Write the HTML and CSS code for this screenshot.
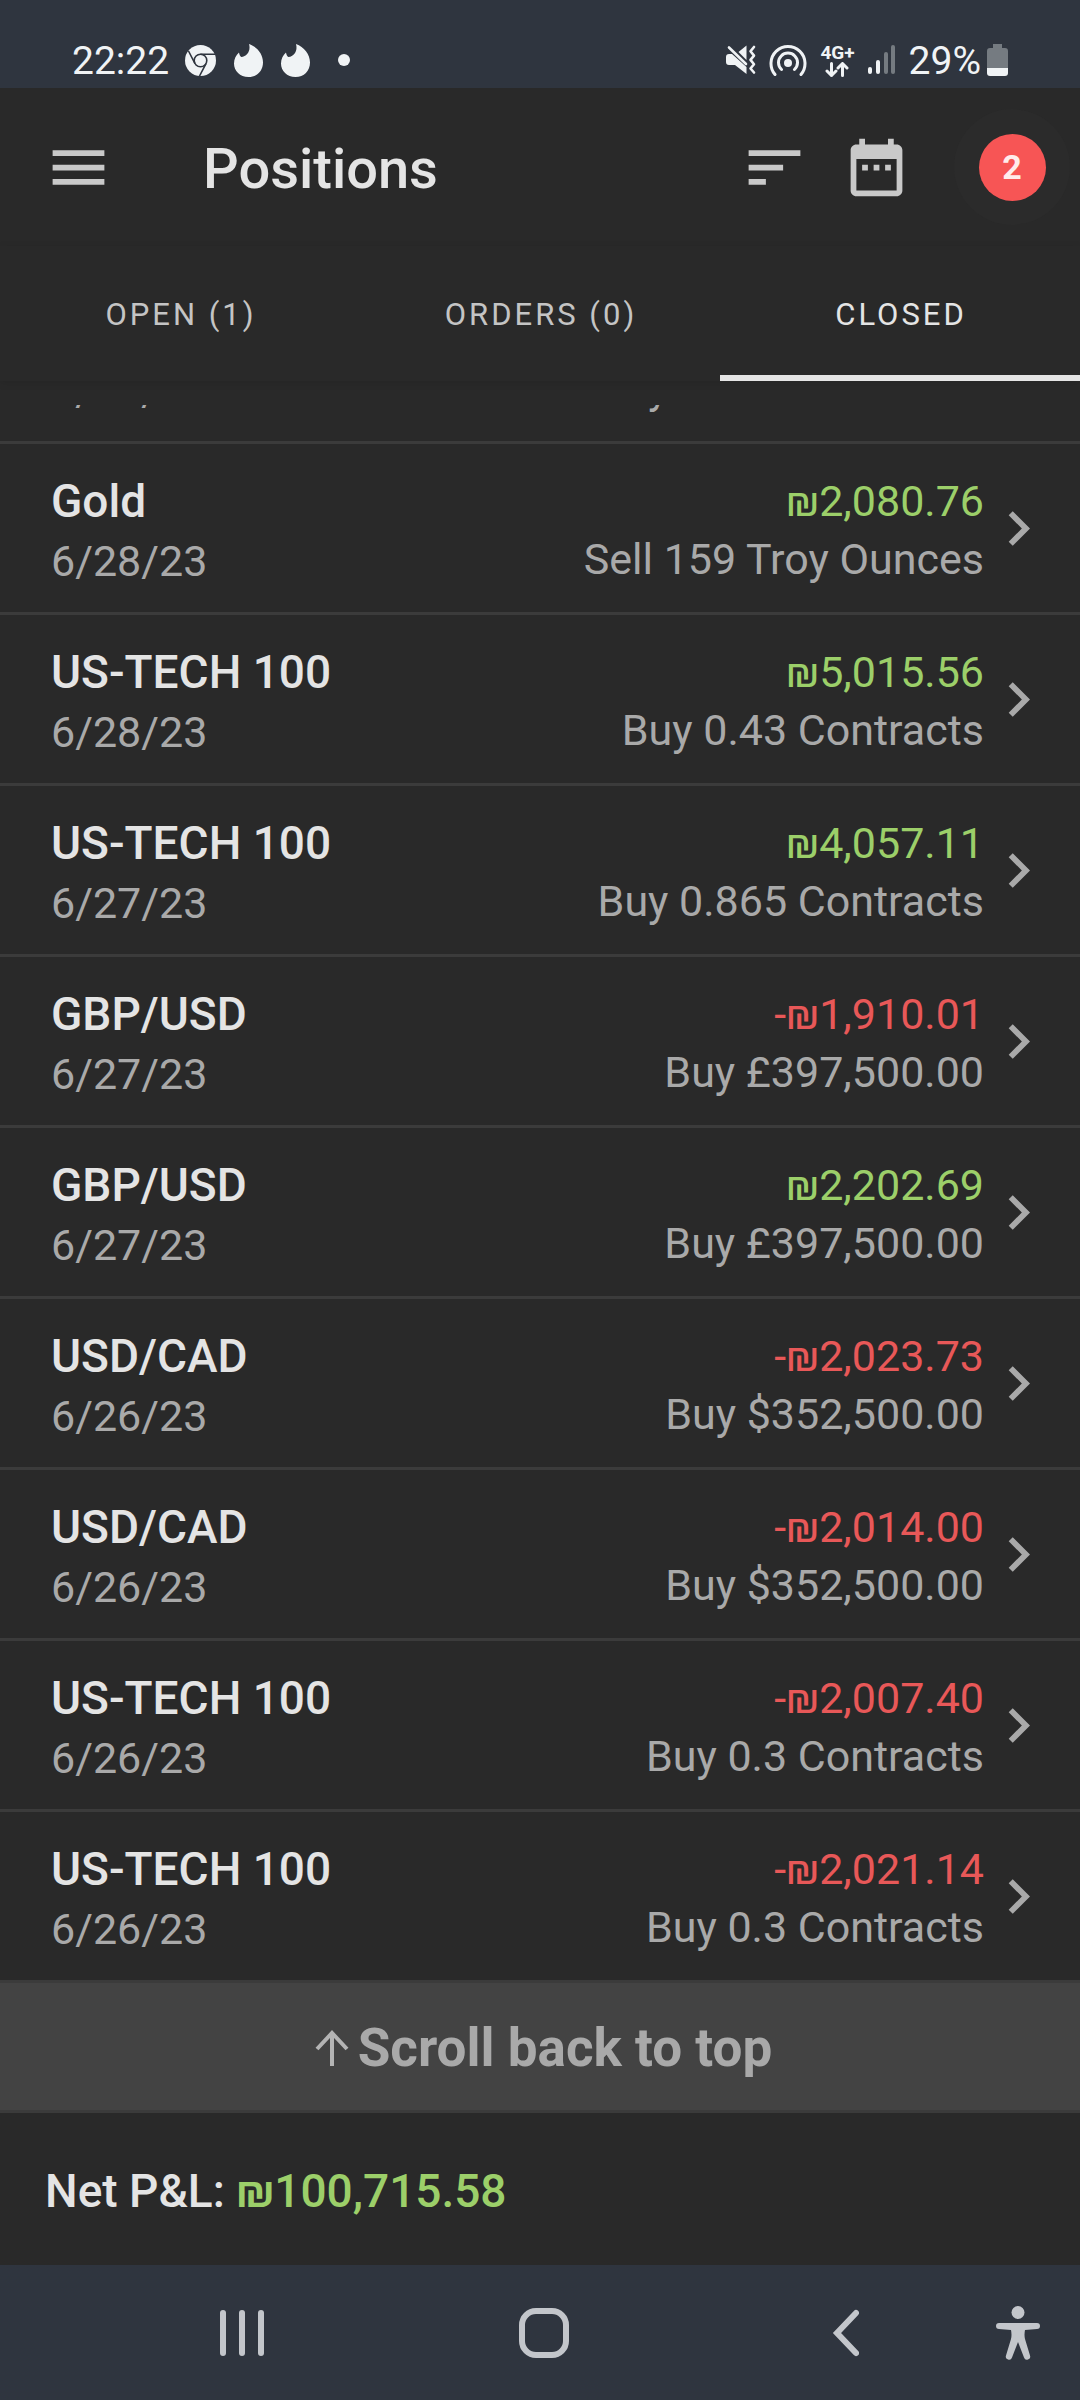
FILE: index.html
```html
<!DOCTYPE html>
<html lang="en">
<head>
    <meta charset="UTF-8">
    <meta name="viewport" content="width=device-width, initial-scale=1.0">
    <title>Positions</title>
    <link rel="stylesheet" href="styles.css">
</head>
<body>

    <div class="status-bar">
        <span class="status-text">22:22</span>
        <div class="notifications">
            <svg width="31" height="31" viewBox="0 0 31 31">
                <circle cx="15.500" cy="15.500" r="15.500" fill="#f0f3f5"/>
                <g fill="none" stroke="#2f353f" stroke-width="1.600">
                    <circle cx="15.500" cy="15.500" r="6.300"/>
                    <path d="M15.500 9.200H30M10 18.600L3.500 6M21 18.600L14.500 31"/>
                </g>
            </svg>
            <svg width="29" height="33" viewBox="0 0 29 33" fill="#f0f3f5">
                <path d="M15 0c8 3 14 10 14 18.500C29 27 23 33 14.500 33S0 27 0 19.500C0 15 2 11 5 8.500c.4 2 1 3.500 2.300 4.600C13 12.500 17 7 15 0z"/>
            </svg>
            <svg width="29" height="33" viewBox="0 0 29 33" fill="#f0f3f5">
                <path d="M15 0c8 3 14 10 14 18.500C29 27 23 33 14.500 33S0 27 0 19.500C0 15 2 11 5 8.500c.4 2 1 3.500 2.300 4.600C13 12.500 17 7 15 0z"/>
            </svg>
            <span class="more-dot"></span>
        </div>
        <div class="indicators">
            <!-- muted / vibrate -->
            <svg width="30" height="30" viewBox="0 0 30 30">
                <path fill="#f0f3f5" d="M3 9h3l14.500 13v7L9 20H3q-3 0-3-3v-5q0-3 3-3zM12.500 7L20.500.500V15z"/>
                <path fill="none" stroke="#f0f3f5" stroke-width="2.600" stroke-linecap="round" d="M3 2.500L20 19"/>
                <path fill="none" stroke="#f0f3f5" stroke-width="2.600" stroke-linecap="round" stroke-linejoin="round" d="M28 2l-3.500 4.300 3.500 4.300-3.500 4.300 3.500 4.300-3.500 4.300 3.500 4"/>
            </svg>
            <!-- hotspot -->
            <svg width="38" height="32" viewBox="0 0 38 32">
                <circle cx="19" cy="19" r="4" fill="#f0f3f5"/>
                <g fill="none" stroke="#f0f3f5" stroke-width="3" stroke-linecap="round">
                    <path d="M12.500 25.500a9.500 9.500 0 1 1 13 0M6 30.500a17 17 0 1 1 26 0"/>
                </g>
            </svg>
            <div class="network">
                <span>4G+</span>
                <svg width="24" height="15" viewBox="0 0 24 15" fill="none" stroke="#f0f3f5" stroke-width="3" stroke-linecap="round" stroke-linejoin="round">
                    <path d="M6.500 1.500v12M2 9l4.500 4.500L11 9M17.500 13.500v-12M13 6l4.500-4.500L22 6"/>
                </svg>
            </div>
            <svg width="28" height="30" viewBox="0 0 28 30" fill="#f0f3f5">
                <rect x="0" y="22" width="4" height="7" rx="2"/>
                <rect x="8" y="15" width="4" height="14" rx="2"/>
                <rect x="16" y="7" width="4" height="22" rx="2" fill="#757b81"/>
                <rect x="23" y="0" width="4" height="29" rx="2" fill="#757b81"/>
            </svg>
            <span class="status-text">29%</span>
            <svg width="21" height="32" viewBox="0 0 21 32">
                <path fill="#757b81" d="M6 0h9v4h3q3 0 3 3v17H0V7q0-3 3-3h3z"/>
                <path fill="#f0f3f5" d="M0 24h21v5q0 3-3 3H3q-3 0-3-3z"/>
            </svg>
        </div>
    </div>

    <header class="toolbar">
        <button class="icon-btn" aria-label="Menu">
            <svg viewBox="0 0 24 24"><path d="M3 18h18v-2H3v2zm0-5h18v-2H3v2zm0-7v2h18V6H3z"/></svg>
        </button>
        <h1>Positions</h1>
        <button class="icon-btn" aria-label="Sort">
            <svg viewBox="0 0 24 24"><path d="M3 18h6v-2H3v2zM3 6v2h18V6H3zm0 7h12v-2H3v2z"/></svg>
        </button>
        <button class="icon-btn" aria-label="Date range">
            <svg viewBox="0 0 24 24"><path d="M9 11H7v2h2v-2zm4 0h-2v2h2v-2zm4 0h-2v2h2v-2zm2-7h-1V2h-2v2H8V2H6v2H5c-1.110 0-1.990.9-1.990 2L3 20c0 1.100.89 2 2 2h14c1.100 0 2-.9 2-2V6c0-1.100-.9-2-2-2zm0 16H5V9h14v11z"/></svg>
        </button>
        <button class="alerts" aria-label="Alerts"><span class="alerts-count">2</span></button>
    </header>

    <nav class="tabs">
        <button class="tab">OPEN (1)</button>
        <button class="tab">ORDERS (0)</button>
        <button class="tab active">CLOSED</button>
    </nav>

    <svg class="symbols">
        <symbol id="chevron" viewBox="0 0 24 24"><path d="M10 6L8.590 7.410 13.170 12l-4.580 4.590L10 18l6-6z"/></symbol>
    </svg>

    <main class="positions">
        <a class="position partial" href="#">
            <div class="instrument"><span>6/28/23</span></div>
            <div class="result"><span>Buy 0.865 Contracts</span></div>
        </a>
        <a class="position" href="#">
            <div class="instrument"><strong>Gold</strong><span>6/28/23</span></div>
            <div class="result"><span class="profit">₪2,080.76</span><span>Sell 159 Troy Ounces</span></div>
            <svg class="chevron"><use href="#chevron"/></svg>
        </a>
        <a class="position" href="#">
            <div class="instrument"><strong>US-TECH 100</strong><span>6/28/23</span></div>
            <div class="result"><span class="profit">₪5,015.56</span><span>Buy 0.43 Contracts</span></div>
            <svg class="chevron"><use href="#chevron"/></svg>
        </a>
        <a class="position" href="#">
            <div class="instrument"><strong>US-TECH 100</strong><span>6/27/23</span></div>
            <div class="result"><span class="profit">₪4,057.11</span><span>Buy 0.865 Contracts</span></div>
            <svg class="chevron"><use href="#chevron"/></svg>
        </a>
        <a class="position" href="#">
            <div class="instrument"><strong>GBP/USD</strong><span>6/27/23</span></div>
            <div class="result"><span class="loss">-₪1,910.01</span><span>Buy £397,500.00</span></div>
            <svg class="chevron"><use href="#chevron"/></svg>
        </a>
        <a class="position" href="#">
            <div class="instrument"><strong>GBP/USD</strong><span>6/27/23</span></div>
            <div class="result"><span class="profit">₪2,202.69</span><span>Buy £397,500.00</span></div>
            <svg class="chevron"><use href="#chevron"/></svg>
        </a>
        <a class="position" href="#">
            <div class="instrument"><strong>USD/CAD</strong><span>6/26/23</span></div>
            <div class="result"><span class="loss">-₪2,023.73</span><span>Buy $352,500.00</span></div>
            <svg class="chevron"><use href="#chevron"/></svg>
        </a>
        <a class="position" href="#">
            <div class="instrument"><strong>USD/CAD</strong><span>6/26/23</span></div>
            <div class="result"><span class="loss">-₪2,014.00</span><span>Buy $352,500.00</span></div>
            <svg class="chevron"><use href="#chevron"/></svg>
        </a>
        <a class="position" href="#">
            <div class="instrument"><strong>US-TECH 100</strong><span>6/26/23</span></div>
            <div class="result"><span class="loss">-₪2,007.40</span><span>Buy 0.3 Contracts</span></div>
            <svg class="chevron"><use href="#chevron"/></svg>
        </a>
        <a class="position" href="#">
            <div class="instrument"><strong>US-TECH 100</strong><span>6/26/23</span></div>
            <div class="result"><span class="loss">-₪2,021.14</span><span>Buy 0.3 Contracts</span></div>
            <svg class="chevron"><use href="#chevron"/></svg>
        </a>
    </main>

    <button class="scroll-top">
        <svg width="34" height="36" viewBox="0 0 34 36" fill="none" stroke="#b4b4b4" stroke-width="4">
            <path d="M17 36V3M2 19L17 3l15 16"/>
        </svg>
        Scroll back to top
    </button>

    <footer class="summary">Net P&amp;L: <span class="profit">₪100,715.58</span></footer>

    <div class="system-nav">
        <button aria-label="Recent apps">
            <svg width="44" height="46" viewBox="0 0 44 46">
                <rect x="0" width="6" height="46" rx="3"/>
                <rect x="19" width="6" height="46" rx="3"/>
                <rect x="38" width="6" height="46" rx="3"/>
            </svg>
        </button>
        <button aria-label="Home">
            <svg width="50" height="50" viewBox="0 0 50 50">
                <rect x="3" y="3" width="44" height="44" rx="14" fill="none" stroke="#c3c6cb" stroke-width="6"/>
            </svg>
        </button>
        <button aria-label="Back">
            <svg width="28" height="48" viewBox="0 0 28 48">
                <path d="M25 4L6 24l19 20" fill="none" stroke="#c3c6cb" stroke-width="6" stroke-linecap="round"/>
            </svg>
        </button>
        <button class="accessibility" aria-label="Accessibility">
            <svg width="44" height="54" viewBox="0 0 44 54">
                <circle cx="22" cy="6.500" r="6.500"/>
                <path d="M3 17h38a3 3 0 0 1 0 6l-12 1q-1 5 0 9l5 16.500a3 3 0 0 1-6 2L22 36l-6 15.500a3 3 0 0 1-6-2L15 33q1-4 0-9L3 23a3 3 0 0 1 0-6z"/>
            </svg>
        </button>
    </div>

</body>
</html>
```

FILE: styles.css
```css
* {
    box-sizing: border-box;
}

body {
    height: 100vh;
    margin: 0;
    display: flex;
    flex-direction: column;
    font-family: Roboto, "Noto Sans", sans-serif;
    font-size: 43px;
    color: #e4e4e4;
    background-color: #292929;
}

button {
    margin: 0;
    padding: 0;
    border: none;
    background: none;
    font: inherit;
    color: inherit;
    cursor: pointer;
}

svg {
    display: block;
    flex-shrink: 0;
}

/* Phone status bar */
.status-bar {
    display: flex;
    align-items: center;
    height: 88px;
    padding: 32px 72px 0;
    background-color: #2f353f;
    color: #f0f3f5;
}

.status-text {
    padding-top: 2px;
    font-size: 39px;
    line-height: 56px;
}

.notifications {
    display: flex;
    align-items: center;
    gap: 18px;
    margin-left: 16px;
}

.more-dot {
    width: 12px;
    height: 12px;
    margin-left: 10px;
    border-radius: 50%;
    background-color: #f0f3f5;
}

.indicators {
    display: flex;
    align-items: center;
    gap: 13px;
    margin-left: auto;
}

.indicators .status-text {
    margin-right: -7px;
}

.network {
    display: flex;
    flex-direction: column;
    align-items: center;
    gap: 1px;
    font-size: 19px;
    font-weight: 700;
    line-height: 17px;
}

/* App toolbar */
.toolbar {
    display: flex;
    align-items: center;
    height: 158px;
    padding: 0 10px 0 44px;
}

.toolbar h1 {
    flex: 1;
    margin: 0;
    padding: 4px 0 0 90px;
    font-size: 56px;
    font-weight: 500;
}

.icon-btn svg {
    width: 69px;
    height: 69px;
    fill: #c9c9c9;
}

.icon-btn + .icon-btn {
    margin-left: 33px;
}

.alerts {
    display: flex;
    align-items: center;
    justify-content: center;
    width: 116px;
    height: 116px;
    margin-left: 43px;
    border-radius: 50%;
    background-color: #2b2b2b;
}

.alerts-count {
    width: 67px;
    border-radius: 50%;
    background-color: #f75555;
    color: #ffecec;
    font-size: 34px;
    font-weight: 700;
    line-height: 67px;
}

.tabs {
    display: flex;
    height: 135px;
    box-shadow: 0 2px 8px rgba(0, 0, 0, 0.1);
}

.tab {
    flex: 1;
    padding: 2px 0 0 2px;
    font-size: 31px;
    letter-spacing: 3px;
    color: #c4c4c4;
}

.tab.active {
    color: #e4e4e4;
    box-shadow: inset 0 -6px #e4e4e4;
}

.symbols {
    position: absolute;
    width: 0;
    height: 0;
}

/* Closed positions, kept scrolled to the last row */
.positions {
    display: flex;
    flex: 1;
    flex-direction: column;
    justify-content: flex-end;
    min-height: 0;
    margin-top: 23px;
    overflow: hidden;
}

.position {
    display: flex;
    flex-shrink: 0;
    align-items: center;
    height: 171px;
    padding: 0 27px 0 51px;
    border-bottom: 3px solid #3b3b3b;
    color: #a9a9a9;
    text-decoration: none;
}

.instrument,
.result {
    display: flex;
    flex-direction: column;
    line-height: 54px;
}

.instrument {
    flex: 1;
}

.instrument strong {
    font-size: 46px;
    font-weight: 500;
    line-height: 66px;
    color: #e4e4e4;
}

.result {
    text-align: right;
}

.profit {
    color: #9ccf69;
}

.loss {
    color: #e85858;
}

.result .profit,
.result .loss {
    line-height: 62px;
}

.chevron {
    width: 69px;
    height: 69px;
    fill: #a9a9a9;
}

/* Row that is almost scrolled out at the top */
.position.partial {
    align-items: flex-end;
    height: 39px;
    padding-right: 96px;
    padding-bottom: 24px;
    overflow: hidden;
}

.partial .result {
    padding-bottom: 2px;
}

.scroll-top {
    display: flex;
    align-items: center;
    justify-content: center;
    gap: 9px;
    height: 130px;
    padding: 3px 0 0 7px;
    border-bottom: 3px solid #3b3b3b;
    background-color: #434343;
    color: #a9a9a9;
    font-size: 53px;
    font-weight: 700;
}

.summary {
    padding: 4px 45px 0;
    font-size: 46px;
    font-weight: 500;
    line-height: 148px;
}

/* Phone navigation bar */
.system-nav {
    display: flex;
    height: 135px;
    padding: 0 40px 0 91px;
    background-color: #2f353f;
    fill: #c3c6cb;
}

.system-nav button {
    display: flex;
    flex: 1;
    align-items: center;
    justify-content: center;
}

.system-nav .accessibility {
    flex: none;
}
```
